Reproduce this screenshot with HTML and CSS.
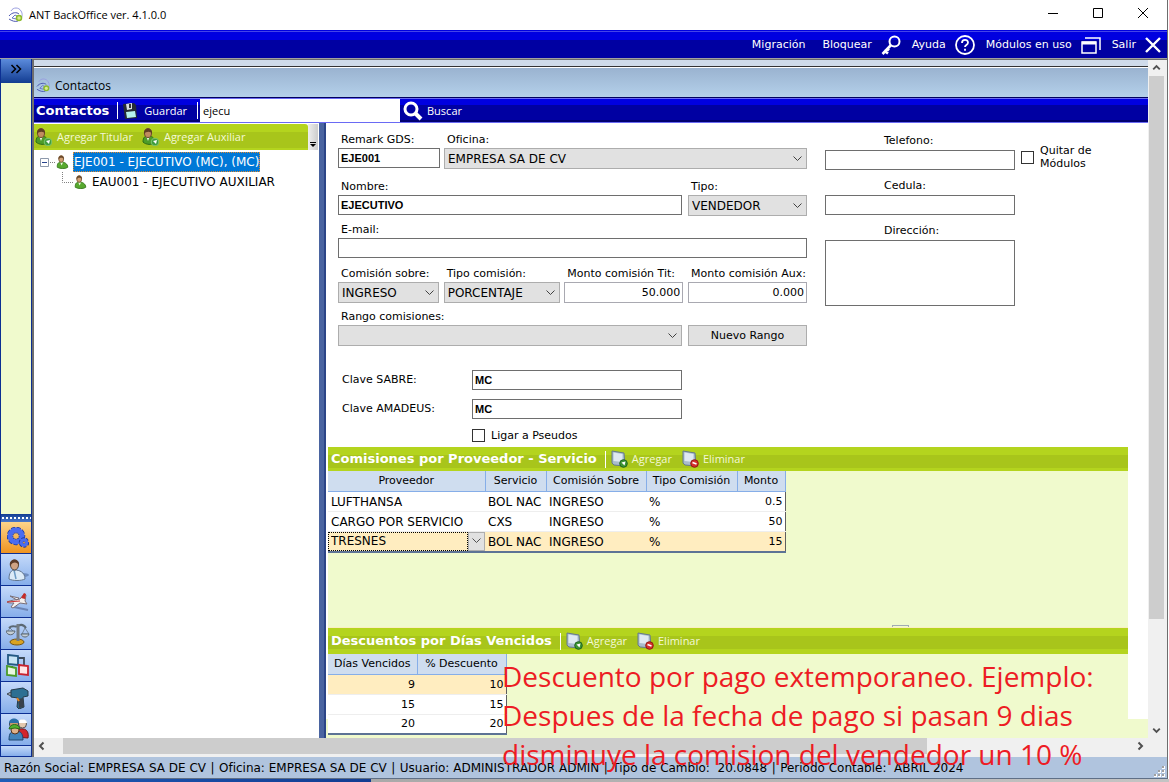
FILE: index.html
```
<!DOCTYPE html>
<html lang="es">
<head>
    <meta charset="UTF-8">
    <meta name="viewport" content="width=device-width, initial-scale=1.0">
    <title>ANT BackOffice ver. 4.1.0.0</title>
    <link rel="stylesheet" href="styles.css">
</head>
<body>
    <svg class="defs" aria-hidden="true">
        <symbol id="logo" viewBox="0 0 16 16">
            <path d="M3 4C5 0 11 0 13 4c2 3 1 6 0 8" fill="none" stroke="#9a9ee0"/>
            <path d="M1 9c3-4 8-4 10-2M1 12c3 2 6 3 9 2" fill="none" stroke="#4a55b0"/>
            <path d="M4 11l3-3 2 1-1 3z" fill="none" stroke="#6878c4"/>
            <circle cx="11" cy="11" r="2.500" fill="#d8ec8c" stroke="#8cba2c" stroke-width="1.500"/>
        </symbol>
        <symbol id="person" viewBox="0 0 14 16">
            <path d="M1 13c0-4 2-5 5-5s7 2 7 6c-2 2-9 2-12 0z" fill="#58a92e" stroke="#33751a"/>
            <path d="M4.500 8.500L6 12l1.500-3.500z" fill="#eef8e6"/>
            <ellipse cx="5.500" cy="4.500" rx="2.800" ry="3.800" fill="#d3a276" stroke="#7d5a38"/>
            <path d="M2.500 5C1.500-.5 9.500-.5 8.500 5 8 3 4 2 2.500 5z" fill="#6b4a2c"/>
        </symbol>
        <symbol id="person-add" viewBox="0 0 18 18">
            <path d="M1 14c0-5 2-6 5-6s7 1 7 7c-3 2-9 2-12-1z" fill="#4d9c28" stroke="#2f6d16"/>
            <path d="M4.500 9L6 13l1.500-4z" fill="#eef8e6"/>
            <ellipse cx="6" cy="5" rx="3.500" ry="4.500" fill="#c08c60" stroke="#6d4b2c"/>
            <path d="M2 6C1-1 11-1 10 6 9 3 4 3 2 6z" fill="#5f3f23"/>
            <circle cx="13" cy="14" r="3.800" fill="#3f9c3c" stroke="#7cc46c"/>
            <path d="M11 13l4-1-1 4z" fill="#fff"/>
        </symbol>
        <symbol id="doc" viewBox="0 0 17 18">
            <path d="M1 1l12 2 1 13-11-1-2-2z" fill="#a9bccd" stroke="#64798c"/>
            <path d="M2.500 2.500l9 1.500v8l-9-1z" fill="#dfe9f2"/>
        </symbol>
        <symbol id="doc-add" viewBox="0 0 17 18">
            <use href="#doc" width="17" height="18"/>
            <circle cx="12.500" cy="13.500" r="3.800" fill="#3c9434" stroke="#1f6420"/>
            <path d="M10.500 12.500l4-1-1 4z" fill="#fff"/>
        </symbol>
        <symbol id="doc-del" viewBox="0 0 17 18">
            <use href="#doc" width="17" height="18"/>
            <circle cx="12.500" cy="13.500" r="3.800" fill="#d5302c" stroke="#931713"/>
            <path d="M10.500 12.500l4 1.500" stroke="#fff" stroke-width="1.500"/>
        </symbol>
        <symbol id="up" viewBox="0 0 16 16"><path d="M4.500 9.500L8 6l3.500 3.500" fill="none" stroke="#505050" stroke-width="2"/></symbol>
        <symbol id="down" viewBox="0 0 16 16"><path d="M4.500 6.500L8 10l3.500-3.500" fill="none" stroke="#505050" stroke-width="2"/></symbol>
        <symbol id="left" viewBox="0 0 16 16"><path d="M9.500 4.500L6 8l3.500 3.500" fill="none" stroke="#505050" stroke-width="2"/></symbol>
        <symbol id="right" viewBox="0 0 16 16"><path d="M6.500 4.500L10 8l-3.500 3.500" fill="none" stroke="#505050" stroke-width="2"/></symbol>
    </svg>

    <div class="window">
        <header class="titlebar">
            <svg width="16" height="16"><use href="#logo"/></svg>
            <h1>ANT BackOffice ver. 4.1.0.0</h1>
            <div class="window-buttons">
                <button aria-label="Minimizar"><svg width="12" height="12"><path d="M1 6.500h10" stroke="#000"/></svg></button>
                <button aria-label="Maximizar"><svg width="12" height="12"><path d="M1.500 1.500h9v9h-9z" fill="none" stroke="#000"/></svg></button>
                <button aria-label="Cerrar"><svg width="12" height="12"><path d="M1 1l10 10M11 1L1 11" stroke="#000"/></svg></button>
            </div>
        </header>

        <nav class="menubar">
            <button>Migración</button>
            <button>Bloquear
                <svg width="20" height="20" fill="none" stroke="#fff" stroke-width="2"><circle cx="13.500" cy="6.500" r="5"/><path d="M10 10l-8.500 9M3 15.500l4 3M5.500 13l2.500 2.500" stroke-width="2.600"/></svg>
            </button>
            <button>Ayuda
                <svg width="20" height="20" fill="none" stroke="#fff" stroke-width="1.800"><circle cx="10" cy="10" r="9"/><path d="M7 8c0-4 6-4 6-.5 0 2.500-3 2.500-3 4.500M10 13.800v2"/></svg>
            </button>
            <button>Módulos en uso
                <svg width="20" height="18" fill="none" stroke="#fff" stroke-width="1.500"><path d="M4 2h15v12M1 6h14v11H1z"/><path d="M1 7h14" stroke-width="3"/></svg>
            </button>
            <button>Salir
                <svg width="16" height="16" stroke="#fff" stroke-width="2.400"><path d="M1 1l14 14M15 1L1 15"/></svg>
            </button>
        </nav>

        <div class="workspace">
            <aside class="sidebar">
                <button class="sidebar-toggle" aria-label="Expandir"><svg width="12" height="10" fill="none" stroke="#000" stroke-width="1.500"><path d="M1.500 1l4 4-4 4M6.500 1l4 4-4 4"/></svg></button>
                <div class="sidebar-space"></div>
                <div class="sidebar-grip"></div>
                <button class="module active" aria-label="Configuración">
                    <svg width="22" height="22" fill="none"><circle cx="9" cy="9" r="6" stroke="#1c3a9e" stroke-width="6.500" stroke-dasharray="3 1"/><circle cx="9" cy="9" r="6" stroke="#4a6cf0" stroke-width="5"/><circle cx="17" cy="15.500" r="3" stroke="#1c3a9e" stroke-width="4.500" stroke-dasharray="2 1"/><circle cx="17" cy="15.500" r="2.800" stroke="#4a6cf0" stroke-width="3"/></svg>
                </button>
                <button class="module" aria-label="Clientes">
                    <svg width="22" height="24"><ellipse cx="15" cy="17" rx="7" ry="2" fill="#6d8cc0"/><path d="M2 21c0-6 2-9 6-9s10 2 10 9c-4 2-12 2-16 0z" fill="#dcebf8" stroke="#60758f"/><path d="M7 12l2 9" stroke="#6c9bc4" stroke-width="1.500"/><ellipse cx="7.500" cy="7" rx="4" ry="5" fill="#cfa283" stroke="#55453a"/><path d="M3 8C1 0 13-1 12 7 10 4 6 3 3 8z" fill="#5b3a28"/></svg>
                </button>
                <button class="module" aria-label="Boletos">
                    <svg width="24" height="20"><path d="M8 15l14 3" stroke="#6b84b5" stroke-width="2"/><path d="M1 10c4-2 9-2 13-3l4-5 2 1-1 6 2 3-7-1-7 5-2-1 3-4c-3 0-6 0-7-1zM4 4l9 2-2 2z" fill="#f4f0ee" stroke="#796f78"/><path d="M15 6l3-5 2 1-1 5z" fill="#c62b28"/><path d="M1 10l13-1" stroke="#c33"/></svg>
                </button>
                <button class="module" aria-label="Contabilidad">
                    <svg width="24" height="24" fill="none" stroke="#5b6873"><path d="M3 6c4-4 6 0 9-2s6-1 8 2" stroke-width="2"/><path d="M4 6l-3 4h7zM19 6l-3 6h7z" stroke-width=".7"/><ellipse cx="11" cy="20" rx="7" ry="3" fill="#d9a323" stroke="#765612"/><path d="M12 2v17" stroke="#737c84" stroke-width="3"/><path d="M0 9h9c-1 5-8 5-9 0zM15 12h8c-1 4-7 4-8 0z" fill="#c7d0d6"/></svg>
                </button>
                <button class="module" aria-label="Reportes">
                    <svg width="24" height="24" stroke-width="1.800"><path d="M11 4h7v9M6 12v4" fill="none" stroke="#3c4a59"/><path d="M2 1l10 1v9L2 10z" fill="#c7e4f5" stroke="#235983"/><path d="M1 12l9 2v8l-9-1z" fill="#e9f7e2" stroke="#499a28"/><path d="M13 11l9 1v9l-9-1z" fill="#ffe6e6" stroke="#c9222e"/></svg>
                </button>
                <button class="module" aria-label="Herramientas">
                    <svg width="22" height="22"><path d="M0 7l6-3v6z" fill="#a9b2ba" stroke="#3c4650"/><path d="M4 3l12-2 5 3v5l-5 1 1 10-5 2-2-2 1-9-7-1z" fill="#2d6f92" stroke="#263b48"/><path d="M11 12l5-1 1 9-5 1z" fill="#39424c"/><path d="M10 11l2 3" stroke="#e28321" stroke-width="2"/></svg>
                </button>
                <button class="module" aria-label="Usuarios">
                    <svg width="22" height="24"><path d="M9 19c0-6 3-9 7-8 4 0 6 4 5 9z" fill="#d3242c" stroke="#76151a"/><circle cx="15.500" cy="6" r="4" fill="#e3c8ae" stroke="#555"/><path d="M11 5c0-5 9-5 9 0z" fill="#fff"/><circle cx="7" cy="6" r="4.500" fill="#c9986f" stroke="#34445a"/><path d="M2 5c0-6 10-6 10 0z" fill="#2b6fa9"/><path d="M2 22c0-7 2-9 7-9s7 3 7 9z" fill="#4384bb" stroke="#1e4773"/><circle cx="8" cy="12" r="4" fill="#dfb18a" stroke="#53351f"/><path d="M2 11c1-6 10-6 11 0l-5-1z" fill="#52b02f" stroke="#2b6e18"/></svg>
                </button>
                <div class="module-rest"></div>
            </aside>

            <main class="mdi">
                <section class="document">
                    <div class="dock-strip"></div>
                    <div class="document-title">
                        <svg width="15" height="15"><use href="#logo"/></svg>
                        <h2>Contactos</h2>
                    </div>
                    <div class="toolbar">
                        <strong>Contactos</strong>
                        <span class="separator"></span>
                        <button class="save">
                            <svg width="16" height="18"><path d="M1 2l11-1 2 2 1 13-12 1z" fill="#262b33"/><path d="M4 2l6-1v6L5 8z" fill="#d8dde2"/><path d="M7 2h2v4H7z" fill="#333"/><path d="M4 10l9-1 1 6-9 1z" fill="#b6f1ee"/></svg>
                            Guardar
                        </button>
                        <span class="separator"></span>
                        <input class="search" type="text" value="ejecu" aria-label="Buscar contacto">
                        <button class="find">
                            <svg width="20" height="20" fill="none" stroke="#fff"><circle cx="8" cy="8" r="6" stroke-width="3"/><path d="M12 12l6 6" stroke-width="4"/></svg>
                            Buscar
                        </button>
                    </div>

                    <div class="split">
                        <div class="tree-pane">
                            <div class="tree-toolbar">
                                <div class="tree-actions">
                                    <button><svg width="18" height="18"><use href="#person-add"/></svg>Agregar Titular</button>
                                    <button><svg width="18" height="18"><use href="#person-add"/></svg>Agregar Auxiliar</button>
                                </div>
                                <button class="overflow" aria-label="Más"><svg width="6" height="6"><path d="M0 .5h6" stroke="#000"/><path d="M0 2h6L3 5z"/></svg></button>
                            </div>
                            <ul class="tree">
                                <li>
                                    <div class="node">
                                        <svg width="19" height="14"><path d="M3.500 3.500h8v8h-8z" fill="#fff" stroke="#8d99ab"/><path d="M5 7.500h5" stroke="#28438d"/><path d="M13 7.500h6" stroke="#808080" stroke-dasharray="1 1"/></svg>
                                        <svg width="13" height="14"><use href="#person"/></svg>
                                        <span class="selected">EJE001 - EJECUTIVO (MC), (MC)</span>
                                    </div>
                                    <ul>
                                        <li class="node">
                                            <svg width="12" height="20"><path d="M.5 0v10.500H12" fill="none" stroke="#808080" stroke-dasharray="1 1"/></svg>
                                            <svg width="13" height="14"><use href="#person"/></svg>
                                            <span>EAU001 - EJECUTIVO AUXILIAR</span>
                                        </li>
                                    </ul>
                                </li>
                            </ul>
                        </div>
                        <div class="splitter"></div>

                        <div class="form-pane">
                            <form class="contact-form">
                                <div class="fields">
                                    <div class="row office">
                                        <div class="field"><label for="remark">Remark GDS:</label><input type="text" id="remark" value="EJE001"></div>
                                        <div class="field"><label for="oficina">Oficina:</label><select id="oficina"><option>EMPRESA SA DE CV</option></select></div>
                                    </div>
                                    <div class="row name">
                                        <div class="field"><label for="nombre">Nombre:</label><input type="text" id="nombre" value="EJECUTIVO"></div>
                                        <div class="field"><label for="tipo">Tipo:</label><select id="tipo"><option>VENDEDOR</option></select></div>
                                    </div>
                                    <div class="row email">
                                        <div class="field"><label for="email">E-mail:</label><input type="text" id="email"></div>
                                    </div>
                                    <div class="row commission">
                                        <div class="field"><label for="sobre">Comisión sobre:</label><select id="sobre"><option>INGRESO</option></select></div>
                                        <div class="field"><label for="tipocom">Tipo comisión:</label><select id="tipocom"><option>PORCENTAJE</option></select></div>
                                        <div class="field"><label for="tit">Monto comisión Tit:</label><input class="amount" type="text" id="tit" value="50.000"></div>
                                        <div class="field"><label for="aux">Monto comisión Aux:</label><input class="amount" type="text" id="aux" value="0.000"></div>
                                    </div>
                                    <div class="row name">
                                        <div class="field"><label for="rango">Rango comisiones:</label><select id="rango"></select></div>
                                        <button class="range-button" type="button">Nuevo Rango</button>
                                    </div>
                                    <div class="keys">
                                        <label for="sabre">Clave SABRE:</label><input type="text" id="sabre" value="MC">
                                        <label for="amadeus">Clave AMADEUS:</label><input type="text" id="amadeus" value="MC">
                                        <label class="check"><input type="checkbox">Ligar a Pseudos</label>
                                    </div>
                                </div>
                                <div class="extra">
                                    <div class="field"><label for="tel">Telefono:</label><input type="text" id="tel"></div>
                                    <div class="field"><label for="cedula">Cedula:</label><input type="text" id="cedula"></div>
                                    <div class="field"><label for="dir">Dirección:</label><textarea id="dir"></textarea></div>
                                </div>
                                <label class="check modules"><input type="checkbox"><span>Quitar de Módulos</span></label>
                            </form>

                            <section class="panel commissions">
                                <div class="panel-bar">
                                    <h3>Comisiones por Proveedor - Servicio</h3>
                                    <span class="separator"></span>
                                    <button><svg width="17" height="18"><use href="#doc-add"/></svg>Agregar</button>
                                    <button><svg width="17" height="18"><use href="#doc-del"/></svg>Eliminar</button>
                                </div>
                                <table class="grid">
                                    <colgroup><col class="w-provider"><col class="w-service"><col class="w-base"><col class="w-kind"><col class="w-amount"></colgroup>
                                    <thead>
                                        <tr><th>Proveedor</th><th>Servicio</th><th>Comisión Sobre</th><th>Tipo Comisión</th><th>Monto</th></tr>
                                    </thead>
                                    <tbody>
                                        <tr><td>LUFTHANSA</td><td>BOL NAC</td><td>INGRESO</td><td>%</td><td class="number">0.5</td></tr>
                                        <tr><td>CARGO POR SERVICIO</td><td>CXS</td><td>INGRESO</td><td>%</td><td class="number">50</td></tr>
                                        <tr class="current">
                                            <td class="editing"><div class="combo"><input type="text" value="TRESNES" aria-label="Proveedor"><button aria-label="Abrir lista"><svg width="9" height="6" fill="none" stroke="#505050"><path d="M.5 .5l4 4 4-4"/></svg></button></div></td>
                                            <td>BOL NAC</td><td>INGRESO</td><td>%</td><td class="number">15</td>
                                        </tr>
                                    </tbody>
                                </table>
                                <div class="handle"></div>
                            </section>

                            <section class="panel discounts">
                                <div class="panel-bar">
                                    <h3>Descuentos por Días Vencidos</h3>
                                    <span class="separator"></span>
                                    <button><svg width="17" height="18"><use href="#doc-add"/></svg>Agregar</button>
                                    <button><svg width="17" height="18"><use href="#doc-del"/></svg>Eliminar</button>
                                </div>
                                <table class="grid">
                                    <colgroup><col class="w-days"><col class="w-days"></colgroup>
                                    <thead>
                                        <tr><th>Días Vencidos</th><th>% Descuento</th></tr>
                                    </thead>
                                    <tbody>
                                        <tr class="current"><td class="number">9</td><td class="number">10</td></tr>
                                        <tr><td class="number">15</td><td class="number">15</td></tr>
                                        <tr><td class="number">20</td><td class="number">20</td></tr>
                                    </tbody>
                                </table>
                                <p class="note">Descuento por pago extemporaneo. Ejemplo:<br>Despues de la fecha de pago si pasan 9 dias<br>disminuye la comision del vendedor un 10 %</p>
                            </section>
                        </div>
                    </div>
                </section>
                <div class="scroll-v">
                    <svg width="16" height="16"><use href="#up"/></svg>
                    <div class="thumb"></div>
                    <svg width="16" height="16"><use href="#down"/></svg>
                </div>
                <div class="scroll-h">
                    <svg width="16" height="16"><use href="#left"/></svg>
                    <div class="thumb"></div>
                    <svg width="16" height="16"><use href="#right"/></svg>
                </div>
            </main>
        </div>

        <footer class="statusbar">
            <span>Razón Social: EMPRESA SA DE CV</span><i>|</i>
            <span>Oficina: EMPRESA SA DE CV</span><i>|</i>
            <span>Usuario: ADMINISTRADOR ADMIN</span><i>|</i>
            <span>Tipo de Cambio:&nbsp; 20.0848</span><i>|</i>
            <span>Periodo Contable:&nbsp; ABRIL 2024</span>
            <svg class="grip" width="12" height="12" fill="#fff"><path d="M9 0h3v3H9zM5 4h3v3H5zM9 4h3v3H9zM1 8h3v3H1zM5 8h3v3H5zM9 8h3v3H9z"/><path d="M9 0h2v2H9zM5 4h2v2H5zM9 4h2v2H9zM1 8h2v2H1zM5 8h2v2H5zM9 8h2v2H9z" fill="#a0a0a0"/></svg>
        </footer>
    </div>
    <div class="desktop"></div>
</body>
</html>
```

FILE: styles.css
```
* {
    box-sizing: border-box;
}
body {
    margin: 0;
    height: 100vh;
    display: flex;
    flex-direction: column;
    overflow: hidden;
    font: 11px/14px "DejaVu Sans", Verdana, sans-serif;
    color: #000;
    background: #fff;
}
button, input, select, textarea {
    font: inherit;
    color: inherit;
    margin: 0;
    padding: 0;
    border: 0;
    border-radius: 0;
    background: none;
}
h1, h2, h3, p, ul {
    margin: 0;
    padding: 0;
    font: inherit;
}
ul {
    list-style: none;
}
svg {
    flex: none;
}
.defs {
    position: absolute;
    width: 0;
    height: 0;
}
.window {
    flex: 1;
    min-height: 0;
    display: flex;
    flex-direction: column;
    border-right: 1px solid #6d6d6d;
    border-bottom: 1px solid #5f6f86;
    margin-right: 1px;
}

/* title and menu */
.titlebar {
    height: 30px;
    display: flex;
    align-items: center;
    gap: 5px;
    padding-left: 8px;
    font: 11px/16px "Open Sans", sans-serif;
}
.window-buttons {
    margin-left: auto;
    padding-right: 2px;
    display: flex;
}
.window-buttons button {
    width: 45px;
    height: 28px;
}
.menubar {
    height: 29px;
    display: flex;
    justify-content: flex-end;
    align-items: center;
    gap: 11px;
    padding: 2px 6px 0 0;
    color: #fff;
    border-bottom: 1px solid #a0a0a0;
    background: linear-gradient(#0000e0 1px, #4444e8 1px, #4444e8 2px, #0000e0 2px, #0000e0 10px, #0000a2 10px);
}
.menubar button {
    display: flex;
    align-items: center;
    gap: 9px;
}
.menubar button:first-child {
    margin-right: 6px;
}

.workspace {
    flex: 1;
    min-height: 0;
    display: flex;
}

/* module bar */
.sidebar {
    width: 32px;
    display: flex;
    flex-direction: column;
    border: solid #0c2f93;
    border-width: 0 1px;
}
.sidebar-toggle {
    height: 24px;
    background: linear-gradient(#5b8bdc, #123c91);
}
.sidebar-space {
    flex: 1;
    background: #f0facd;
}
.sidebar-grip {
    height: 8px;
    background: radial-gradient(circle, #fff 1px, transparent 1px) 0 0 / 4px 8px, linear-gradient(#123c91, #4a79c9);
}
.module {
    height: 32px;
    display: flex;
    align-items: center;
    justify-content: center;
    padding-left: 4px;
    border-bottom: 1px solid #0c2f93;
    background: linear-gradient(#c5dafa, #86aeea);
}
.module.active {
    background: linear-gradient(#fcd48a, #ef9420);
}
.module-rest {
    height: 11px;
    background: linear-gradient(#c5dafa, #86aeea);
    border-bottom: 1px solid #0c2f93;
}

.mdi {
    flex: 1;
    min-width: 0;
    display: grid;
    grid-template-columns: 1fr 16px;
    grid-template-rows: 1fr 16px;
    border: solid #6e6e6e;
    border-width: 1px 0 0 2px;
    padding: 0 3px 3px 0;
    background: #f0f0f0;
}
.document {
    min-width: 0;
    min-height: 0;
    display: flex;
    flex-direction: column;
}
.dock-strip {
    height: 8px;
    background: #cfdbea;
    border-bottom: 1px solid #fff;
    box-shadow: inset 0 -1px #333;
}
.document-title {
    height: 30px;
    display: flex;
    align-items: center;
    gap: 4px;
    padding: 6px 2px 0;
    font: 12px/16px "Open Sans", sans-serif;
    background: linear-gradient(#9ab3d0, #b4d0ea);
    border-bottom: 1px solid #000060;
}
.toolbar {
    height: 25px;
    display: flex;
    align-items: center;
    color: #fff;
    border: solid #6a6af4;
    border-width: 1px 0;
    background: linear-gradient(#0000e0 6px, #0000a2 6px, #0000a2 21px, #000070 21px);
    font: 11px/16px "Open Sans", sans-serif;
}
.toolbar strong, .panel-bar h3 {
    font: bold 13px/16px "DejaVu Sans", Verdana, sans-serif;
    color: #fff;
    white-space: nowrap;
}
.toolbar strong {
    margin: 0 8px 0 2px;
}
.separator {
    width: 1px;
    height: 17px;
    background: #fff;
}
.toolbar button {
    display: flex;
    align-items: center;
}
.save {
    gap: 6px;
    margin: 0 10px 0 4px;
}
.find {
    gap: 4px;
    margin-left: 3px;
}
.search {
    width: 200px;
    height: 23px;
    margin-left: 2px;
    padding: 0 3px;
    color: #000;
    background: #fff;
}

.split {
    flex: 1;
    min-height: 0;
    display: flex;
    background: #fff;
}

/* contact tree */
.tree-pane {
    width: 285px;
    flex: none;
}
.tree-toolbar {
    height: 27px;
    padding-top: 1px;
    display: flex;
    color: #f4f9d6;
    font: 11px/16px "Open Sans", sans-serif;
}
.tree-actions {
    flex: 1;
    display: flex;
    align-items: center;
    gap: 9px;
    padding-left: 1px;
    background: linear-gradient(#b4d41e 8px, #a8c51b 8px, #a8c51b 24px, #b4d41e 24px);
    border-radius: 0 3px 0 0;
}
.tree-actions button {
    display: flex;
    align-items: center;
    gap: 4px;
}
.overflow {
    width: 10px;
    margin-right: 1px;
    display: flex;
    align-items: flex-end;
    justify-content: center;
    padding-bottom: 2px;
    background: linear-gradient(90deg, #eee, #ccc);
}
.tree {
    padding: 2px 0 0 3px;
    font-size: 12px;
}
.tree ul {
    padding-left: 25px;
}
.node {
    display: flex;
    align-items: center;
    height: 20px;
    white-space: nowrap;
}
.node span {
    margin-left: 4px;
    padding: 2px 0;
    border: 1px dotted transparent;
}
.node .selected {
    color: #fff;
    background: #0078d7;
    border-color: #e08a30;
}
.splitter {
    width: 7px;
    flex: none;
    background: #4a64a0;
    border-right: 2px solid #2c4587;
}

/* form */
.form-pane {
    flex: 1;
    min-width: 0;
    display: flex;
    flex-direction: column;
    padding-left: 2px;
    background: linear-gradient(#fff, #fff) 0 0 / 100% calc(100% - 19px) no-repeat #f0facd;
}
.contact-form {
    display: flex;
    padding: 10px 20px 5px 10px;
}
.fields {
    width: 469px;
    margin-right: 18px;
}
.row {
    display: grid;
    grid-template-columns: 1fr;
    height: 43px;
}
.row.office {
    grid-template-columns: 102px 1fr;
    column-gap: 4px;
    height: 47px;
}
.row.name {
    grid-template-columns: 1fr 119px;
    column-gap: 6px;
}
.row.email {
    height: 44px;
}
.row.commission {
    grid-template-columns: 101px 116px 119px 119px;
    justify-content: space-between;
}
.field label {
    display: block;
    padding-left: 3px;
    margin-bottom: 1px;
    white-space: nowrap;
}
.field input, .keys > input, .field textarea {
    display: block;
    width: 100%;
    height: 20px;
    padding: 0 2px;
    border: 1px solid #6e6e6e;
    background: #fff;
    font: bold 11px/14px "Liberation Sans", Arial, sans-serif;
}
.field .amount {
    height: 21px;
    text-align: right;
    border-color: #a9a9b1;
    font: inherit;
}
select {
    appearance: none;
    display: block;
    width: 100%;
    height: 21px;
    padding: 0 16px 0 3px;
    border: 1px solid #adadad;
    font-size: 12px;
    background: #e1e1e1 url("data:image/svg+xml,%3Csvg xmlns='http://www.w3.org/2000/svg' width='9' height='6'%3E%3Cpath d='M.5 .5l4 4 4-4' fill='none' stroke='%23404040'/%3E%3C/svg%3E") right 4px center no-repeat;
}
.range-button {
    height: 21px;
    margin-top: 15px;
    border: 1px solid #adadad;
    background: #e1e1e1;
}
.keys {
    display: grid;
    grid-template-columns: 130px 210px;
    row-gap: 9px;
    margin-top: 17px;
    padding-left: 4px;
}
.keys > label {
    line-height: 19px;
}
.keys .check {
    grid-column: 2;
}
.check {
    display: flex;
    align-items: center;
    gap: 6px;
    line-height: 13px;
    height: 14px;
}
.check input {
    appearance: none;
    flex: none;
    width: 13px;
    height: 13px;
    border: 1px solid #333;
    background: #fff;
}
.extra {
    width: 190px;
    padding-top: 1px;
}
.extra label {
    padding-left: 59px;
    margin-bottom: 2px;
}
.extra .field {
    margin-bottom: 9px;
}
.field textarea {
    height: 66px;
    resize: none;
}
.check.modules {
    width: 90px;
    margin: 17px 0 0 6px;
}

/* lists */
.panel {
    position: relative;
    margin-right: 20px;
    background: #f0facd;
}
.commissions {
    flex: 1;
    border-bottom: 1px solid #fbeec0;
}
.discounts {
    flex: none;
    height: 110px;
}
.panel-bar {
    height: 24px;
    display: flex;
    align-items: center;
    padding-left: 3px;
    color: #f4f9d6;
    font: 11px/16px "Open Sans", sans-serif;
    background: linear-gradient(#b4d41e 8px, #a8c51b 8px, #a8c51b 21px, #b4d41e 21px);
}
.discounts .panel-bar {
    height: 26px;
}
.panel-bar .separator {
    margin: 0 5px 0 8px;
}
.panel-bar button {
    display: flex;
    align-items: center;
    gap: 4px;
    margin-right: 10px;
}
.grid {
    table-layout: fixed;
    border-collapse: collapse;
    background: #fff;
    border-right: 1px solid #5f5f5f;
    border-bottom: 2px solid #5d7395;
}
.grid th, .grid td {
    height: 20px;
    padding: 1px 3px 0;
    font-weight: normal;
    text-align: left;
    white-space: nowrap;
    overflow: hidden;
    border-bottom: 1px solid #eee;
}
.grid td {
    font-size: 12px;
}
.grid th {
    padding: 1px 0 0;
    text-align: center;
    background: #cfddef;
    border-right: 1px solid #86aee8;
    border-bottom: 1px solid #86aee8;
}
.grid .number {
    font-size: 11px;
    text-align: right;
    padding-right: 2px;
}
.grid .current td {
    background: #ffedc0;
}
.grid .editing {
    padding: 0;
}
.combo {
    display: flex;
    height: 19px;
}
.combo input {
    flex: 1;
    min-width: 0;
    padding: 0 2px;
    border: 1px dotted #000;
}
.combo button {
    width: 17px;
    display: flex;
    align-items: center;
    justify-content: center;
    border: 1px solid #adadad;
    background: #e1e1e1;
}
.commissions .grid {
    width: 457px;
}
.discounts .grid {
    width: 178px;
}
.w-provider {
    width: 157px;
}
.w-service {
    width: 61px;
}
.w-base {
    width: 100px;
}
.w-kind {
    width: 91px;
}
.w-amount {
    width: 48px;
}
.w-days {
    width: 89px;
}
.handle {
    position: absolute;
    right: 219px;
    bottom: 0;
    width: 17px;
    height: 2px;
    border: 1px solid #a0aab4;
    border-bottom: 0;
}
.note {
    position: absolute;
    left: 174px;
    top: 29px;
    z-index: 2;
    color: #ed1c24;
    font: 28px/39px "Open Sans", sans-serif;
    white-space: nowrap;
}

/* scroll bars */
.scroll-v, .scroll-h {
    display: flex;
}
.scroll-v {
    flex-direction: column;
    padding-left: 1px;
}
.scroll-v svg {
    width: 15px;
}
.scroll-v .thumb {
    flex: 1;
    background: #cdcdcd;
    margin-bottom: 103px;
}
.scroll-h svg:first-child {
    margin-right: 13px;
}
.scroll-h .thumb {
    flex: 1;
    background: #cdcdcd;
    margin-right: 205px;
}

.statusbar {
    height: 21px;
    display: flex;
    align-items: center;
    padding: 1px 2px 0 4px;
    background: #b0c4de;
    white-space: nowrap;
    font-size: 12px;
}
.statusbar i {
    width: 13px;
    text-align: center;
    font-style: normal;
}
.grip {
    margin-left: auto;
    align-self: flex-end;
}
.desktop {
    height: 3px;
    background: linear-gradient(90deg, #1f5db8, #123c91 371px, #a9a9a9 371px, #c4c4c4);
}
```
